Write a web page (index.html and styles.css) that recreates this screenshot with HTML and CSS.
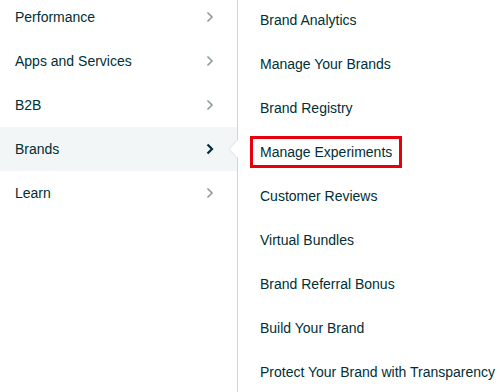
FILE: index.html
```html
<!DOCTYPE html>
<html lang="en">
  <head>
    <meta charset="UTF-8" />
    <title>Menu</title>
    <link rel="stylesheet" href="styles.css">
  </head>
  <body>
    <div class="menu">
      <ul class="primary">
        <li class="primary-item">
          <span>Performance</span>
          <svg class="chevron" width="8" height="12" viewBox="0 0 8 12"><path d="M1.5 1.5 L6 6 L1.5 10.5" /></svg>
        </li>
        <li class="primary-item">
          <span>Apps and Services</span>
          <svg class="chevron" width="8" height="12" viewBox="0 0 8 12"><path d="M1.5 1.5 L6 6 L1.5 10.5" /></svg>
        </li>
        <li class="primary-item">
          <span>B2B</span>
          <svg class="chevron" width="8" height="12" viewBox="0 0 8 12"><path d="M1.5 1.5 L6 6 L1.5 10.5" /></svg>
        </li>
        <li class="primary-item active">
          <span>Brands</span>
          <svg class="chevron" width="8" height="12" viewBox="0 0 8 12"><path d="M1.5 1.5 L6 6 L1.5 10.5" /></svg>
        </li>
        <li class="primary-item">
          <span>Learn</span>
          <svg class="chevron" width="8" height="12" viewBox="0 0 8 12"><path d="M1.5 1.5 L6 6 L1.5 10.5" /></svg>
        </li>
      </ul>

      <ul class="secondary">
        <li class="secondary-item">Brand Analytics</li>
        <li class="secondary-item">Manage Your Brands</li>
        <li class="secondary-item">Brand Registry</li>
        <li class="secondary-item"><span class="highlight">Manage Experiments</span></li>
        <li class="secondary-item">Customer Reviews</li>
        <li class="secondary-item">Virtual Bundles</li>
        <li class="secondary-item">Brand Referral Bonus</li>
        <li class="secondary-item">Build Your Brand</li>
        <li class="secondary-item">Protect Your Brand with Transparency</li>
      </ul>
    </div>
  </body>
</html>
```

FILE: styles.css
```css
* {
  margin: 0;
  padding: 0;
  box-sizing: border-box;
}

body {
  font-family: "Liberation Sans", Arial, sans-serif;
  font-size: 14px;
  color: #002f36;
  background-color: #fff;
  overflow: hidden;
}

.menu {
  display: flex;
  align-items: flex-start;
  height: 392px;
}

.primary {
  list-style-type: none;
  width: 237px;
  flex-shrink: 0;
  margin-top: -5px;
}

.primary-item {
  position: relative;
  display: flex;
  align-items: center;
  justify-content: space-between;
  height: 44px;
  padding: 0 23px 0 15px;
}

.chevron {
  fill: none;
  stroke: #8d9a9c;
  stroke-width: 1.6;
}

.primary-item.active {
  background-color: #f3f6f6;
}

.primary-item.active .chevron {
  stroke: #002f36;
  stroke-width: 2.2;
}

/* little white pointer into the sub menu */
.primary-item.active::after {
  content: "";
  position: absolute;
  right: -1px;
  top: 13px;
  width: 0;
  height: 0;
  border-top: 9px solid transparent;
  border-bottom: 9px solid transparent;
  border-right: 8px solid #fff;
  filter: drop-shadow(-1px 0 1px rgba(0, 0, 0, 0.08));
}

.secondary {
  list-style-type: none;
  flex: 1;
  height: 400px;
  margin-top: -2px;
  border-left: 1px solid #cfd4d4;
  padding-left: 22px;
}

.secondary-item {
  display: flex;
  align-items: center;
  height: 44px;
  white-space: nowrap;
}

.highlight {
  display: inline-block;
  margin-left: -10px;
  padding: 5px 7px;
  border: 3px solid #e8000b;
}
```
